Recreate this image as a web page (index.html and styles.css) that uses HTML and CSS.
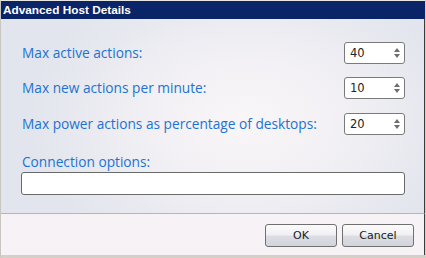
FILE: index.html
```html
<!DOCTYPE html>
<html lang="en">
<head>
    <meta charset="UTF-8">
    <title>Advanced Host Details</title>
    <link rel="stylesheet" href="styles.css">
</head>
<body>
    <div class="window">
        <div class="titlebar">Advanced Host Details</div>

        <div class="content">
            <div class="row">
                <label class="label">Max active actions:</label>
                <div class="spinner">
                    <span class="spin-value">40</span>
                    <span class="spin-arrows"><span class="up"></span><span class="down"></span></span>
                </div>
            </div>
            <div class="row">
                <label class="label">Max new actions per minute:</label>
                <div class="spinner">
                    <span class="spin-value">10</span>
                    <span class="spin-arrows"><span class="up"></span><span class="down"></span></span>
                </div>
            </div>
            <div class="row">
                <label class="label">Max power actions as percentage of desktops:</label>
                <div class="spinner">
                    <span class="spin-value">20</span>
                    <span class="spin-arrows"><span class="up"></span><span class="down"></span></span>
                </div>
            </div>

            <div class="field">
                <label class="label">Connection options:</label>
                <div class="textbox"></div>
            </div>
        </div>

        <div class="footer">
            <button class="btn">OK</button>
            <button class="btn">Cancel</button>
        </div>
    </div>
</body>
</html>
```

FILE: styles.css
```css
body {
    margin: 0;
    background: #d4d0c8;
}

.window {
    width: 424px;
    height: 256px;
    border-top: 1px solid #e8e6e0;
    border-left: 1px solid #c8c6c0;
    display: flex;
    flex-direction: column;
}

.titlebar {
    height: 18px;
    line-height: 18px;
    background: #0a2468;
    color: #ffffff;
    font-family: "Liberation Sans", sans-serif;
    font-weight: bold;
    font-size: 11.8px;
    padding-left: 2px;
}

.content {
    height: 195px;
    box-sizing: border-box;
    padding: 23px 19px 0 20px;
    border-right: 1px solid #3c3c3c;
    border-bottom: 1px solid #b4b4c4;
    background:
        radial-gradient(ellipse 220px 150px at 58% 52%, #f9f6f8 0%, #f3f1f5 38%, rgba(230, 232, 240, 0) 100%),
        #e2e5ed;
    display: flex;
    flex-direction: column;
}

.row {
    display: flex;
    justify-content: space-between;
    align-items: center;
    height: 22px;
    margin-bottom: 13px;
}

.row:nth-child(3) {
    margin-top: 1px;
}

.label {
    color: #1c72d4;
    font-family: "Open Sans", sans-serif;
    font-size: 13.7px;
    line-height: 18px;
    padding-left: 1px;
}

.spinner {
    box-sizing: border-box;
    width: 61px;
    height: 22px;
    background: #ffffff;
    border: 1px solid #7a7a7a;
    border-radius: 3px;
    display: flex;
    align-items: center;
    justify-content: space-between;
    padding: 0 4px 0 5px;
}

.spin-value {
    font-family: "DejaVu Sans", sans-serif;
    font-size: 11.5px;
    color: #222222;
}

.spin-arrows {
    display: flex;
    flex-direction: column;
    gap: 2px;
}

.up, .down {
    width: 0;
    height: 0;
    border-left: 3px solid transparent;
    border-right: 3px solid transparent;
}

.up {
    border-bottom: 4px solid #6e6e6e;
}

.down {
    border-top: 4px solid #6e6e6e;
}

.field {
    display: flex;
    flex-direction: column;
    gap: 1px;
    margin-top: 5px;
}

.textbox {
    box-sizing: border-box;
    height: 23px;
    background: #ffffff;
    border: 1px solid #6a6a6a;
    border-radius: 3px;
}

.footer {
    height: 41px;
    box-sizing: border-box;
    background: #f7f2f5;
    border-right: 1px solid #3c3c3c;
    display: flex;
    justify-content: flex-end;
    gap: 5px;
    padding: 10px 10px 0 0;
}

.btn {
    box-sizing: border-box;
    width: 72px;
    height: 23px;
    border: 1px solid #707070;
    border-radius: 3px;
    background: linear-gradient(#fbfbfc 0%, #f1f1f4 45%, #dcdde3 55%, #d2d4dc 100%);
    font-family: "DejaVu Sans", sans-serif;
    font-size: 11px;
    color: #1a1a1a;
    padding: 0;
}
```
